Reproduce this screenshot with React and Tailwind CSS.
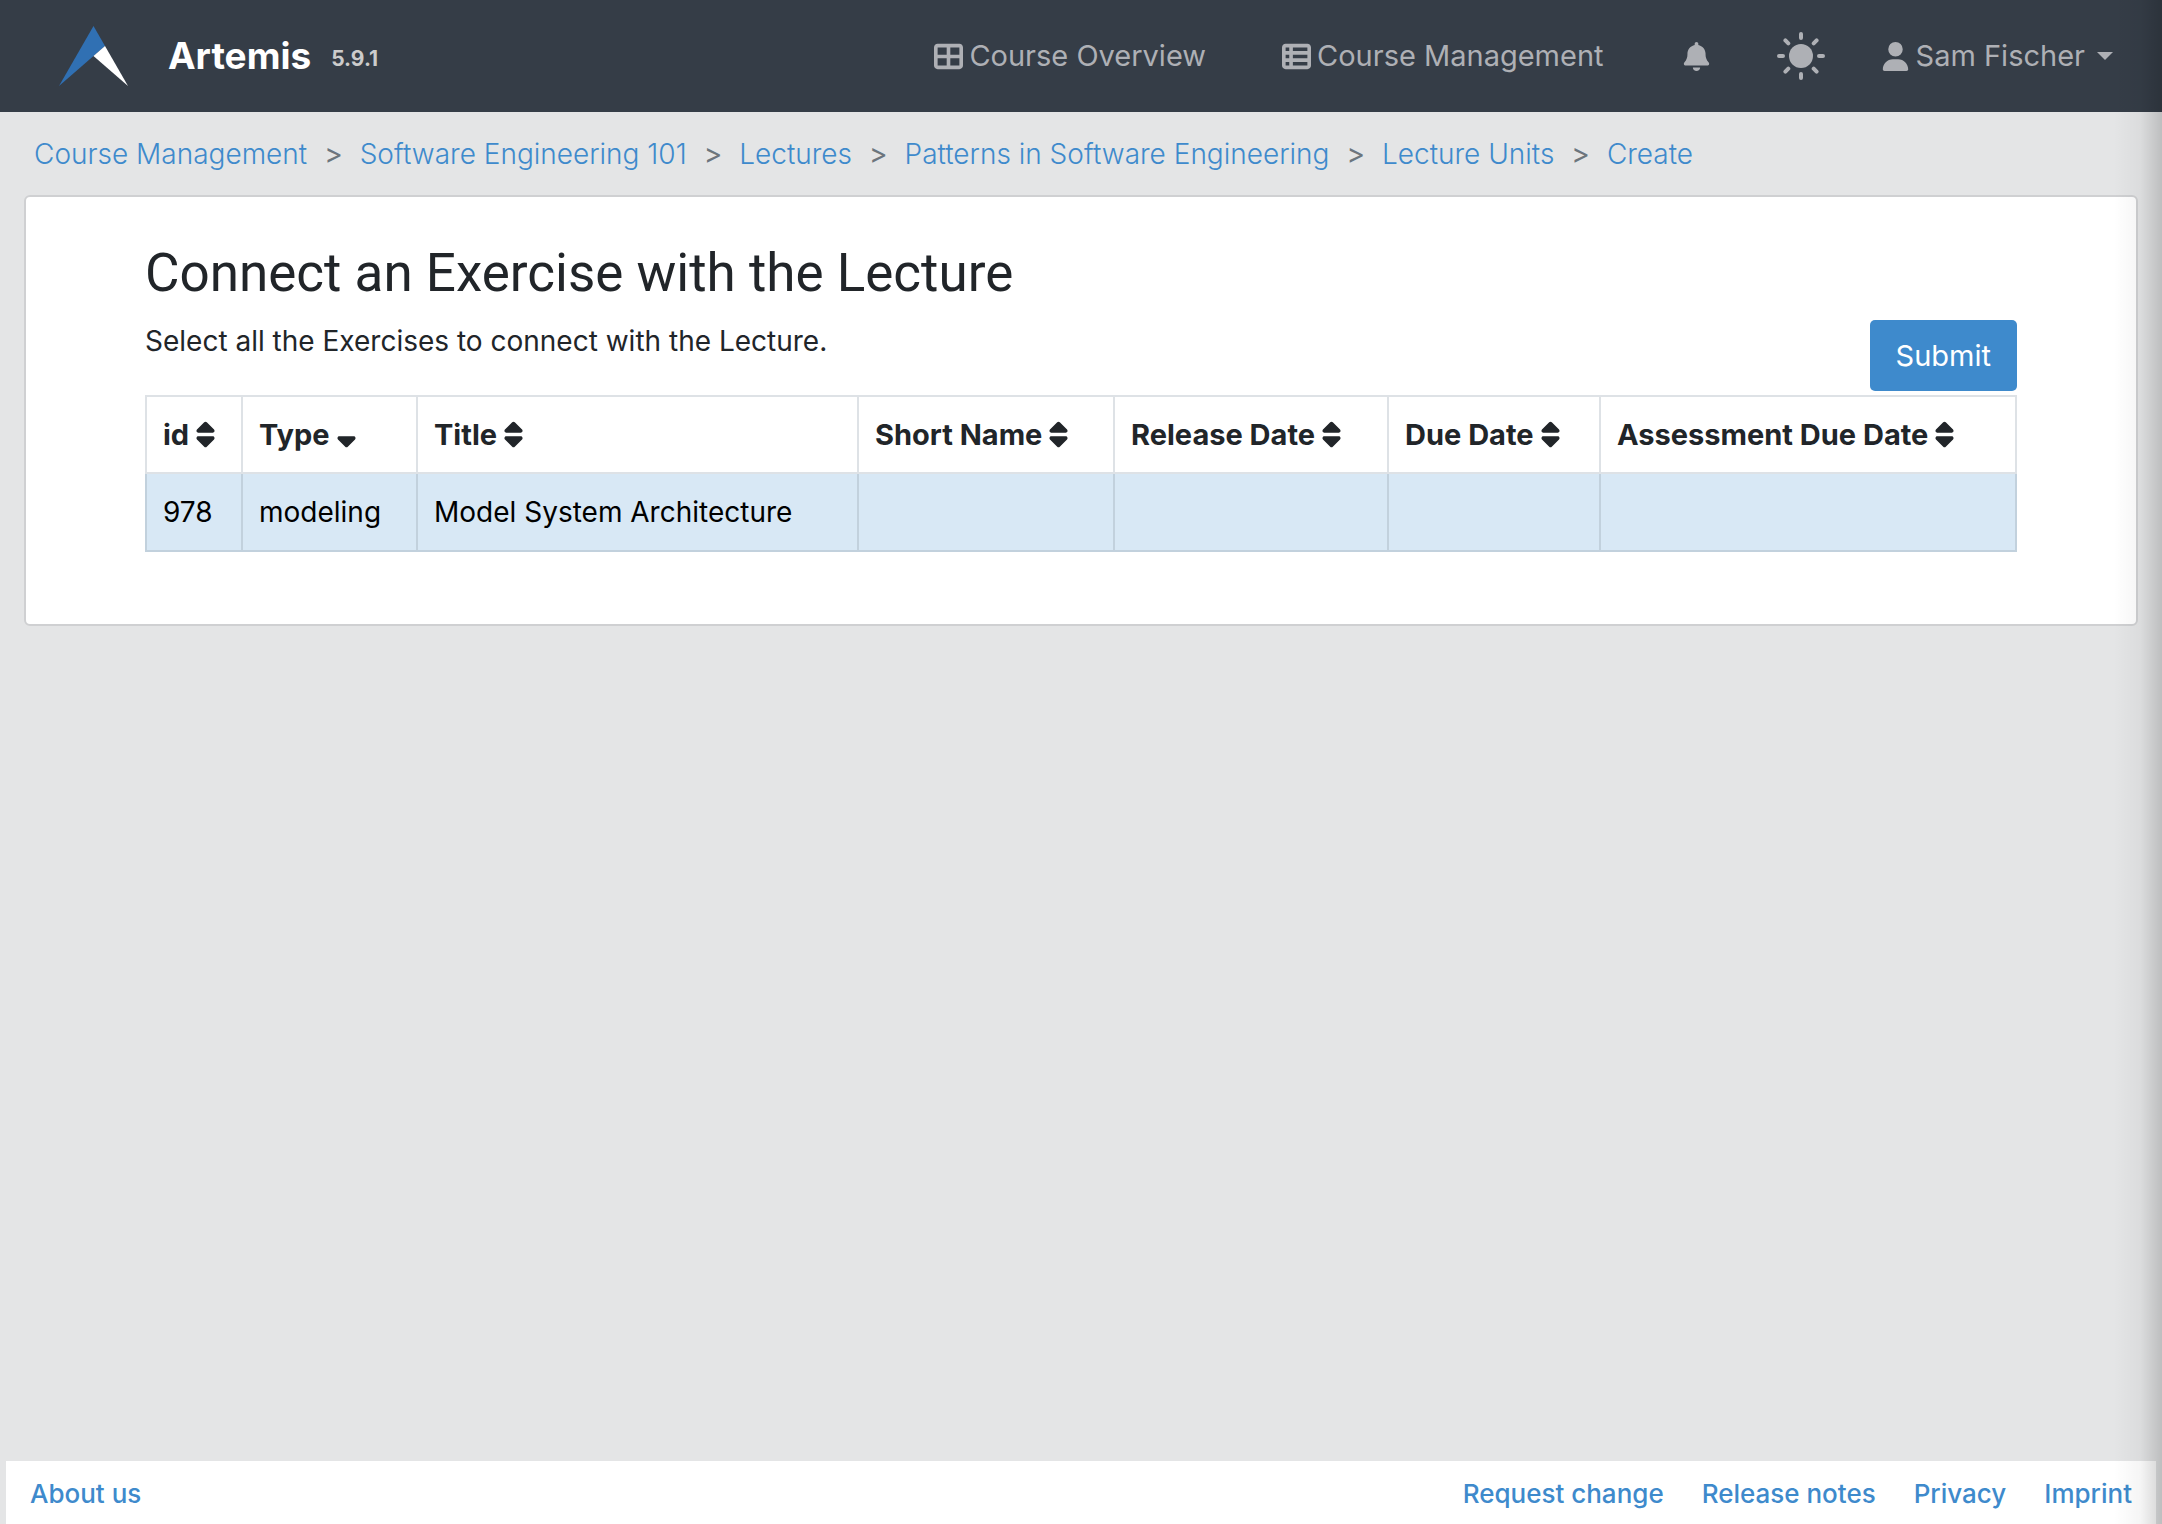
import { FaTableCellsLarge, FaTableList, FaBell, FaUser, FaSort, FaSortDown } from "react-icons/fa6";

const crumbs = ["Course Management", "Software Engineering 101", "Lectures", "Patterns in Software Engineering", "Lecture Units", "Create"];

const columns = [
  { label: "id", width: "w-[96px]" },
  { label: "Type", width: "w-[175px]", sorted: true },
  { label: "Title", width: "w-[441px]" },
  { label: "Short Name", width: "w-[256px]" },
  { label: "Release Date", width: "w-[274px]" },
  { label: "Due Date", width: "w-[212px]" },
  { label: "Assessment Due Date", width: "" },
];

const row = ["978", "modeling", "Model System Architecture", "", "", "", ""];

function Logo() {
  return (
    <svg viewBox="0 0 70 60" className="h-[60px] w-[70px]" aria-hidden="true">
      <path d="M34.500 0L46 20L34.500 30L0 60Z" fill="#3070b3" />
      <path d="M46 20L69 60L34.500 30Z" fill="#fff" />
    </svg>
  );
}

function Sun() {
  return (
    <svg viewBox="0 0 48 48" className="size-12" aria-hidden="true">
      <circle cx="24" cy="24" r="12" fill="currentColor" />
      <g stroke="currentColor" strokeWidth="4" strokeLinecap="round">
        <path d="M24 2v4M24 42v4M2 24h4M42 24h4M8.400 8.400l2.900 2.900M36.700 36.700l2.900 2.900M39.600 8.400l-2.900 2.900M11.300 36.700l-2.900 2.900" />
      </g>
    </svg>
  );
}

export default function App() {
  return (
    <div className="relative flex min-h-screen flex-col bg-[#e4e5e6] font-['Inter',sans-serif] text-[28px] leading-[42px] text-[#212529]">
      <header className="flex h-28 items-center bg-[#353d47] pr-[49px] pl-[59px] text-[#aeb0b5]">
        <a href="#home" className="flex items-center text-white">
          <Logo />
          <span className="ml-[39px] text-[37px] font-bold">Artemis</span>
          <span className="ml-5 pt-1.5 text-[21px] font-bold text-[#cccccc]">5.9.1</span>
        </a>
        <nav className="ml-auto flex items-center text-[29px]">
          <a href="#overview" className="flex items-center gap-1.5"><FaTableCellsLarge />Course Overview</a>
          <a href="#management" className="ml-[76px] flex items-center gap-1.5"><FaTableList />Course Management</a>
          <button type="button" aria-label="Notifications" className="ml-[78px]"><FaBell /></button>
          <button type="button" aria-label="Toggle theme" className="ml-[66px]"><Sun /></button>
          <button type="button" className="ml-14 flex items-center gap-1.5">
            <FaUser />
            Sam Fischer
            <svg viewBox="0 0 16 8" className="ml-1.5 h-2 w-4" aria-hidden="true"><path d="M0 0h16L8 8z" fill="currentColor" /></svg>
          </button>
        </nav>
      </header>

      <nav aria-label="Breadcrumb" className="px-[34px] pt-[21px] pb-5">
        <ol className="flex font-light">
          {crumbs.map((c, i) => (
            <li key={c} className="flex">
              {i > 0 && <span className="px-[17px] font-normal text-[#6c757d]">&gt;</span>}
              <a href={"#crumb-" + i} className="text-[#3e8acc]">{c}</a>
            </li>
          ))}
        </ol>
      </nav>

      <main className="mx-6 rounded-md border-2 border-[#cfd0d2] bg-white px-[119px] pt-11 pb-[72px]">
        <h1 className="font-['Roboto',sans-serif] text-[53px] leading-[64px] font-normal">Connect an Exercise with the Lecture</h1>
        <div className="flex items-start justify-between pt-[15px]">
          <p>Select all the Exercises to connect with the Lecture.</p>
          <button type="button" className="mb-1 h-[71px] rounded-[5px] bg-[#3e8acc] px-[26px] text-[29px] text-white">Submit</button>
        </div>
        <table className="w-full table-fixed border-collapse text-left">
          <thead>
            <tr className="h-[77px]">
              {columns.map((c) => (
                <th key={c.label} scope="col" className={"border-2 border-[#dee2e6] px-4 text-[29px] font-bold whitespace-nowrap " + c.width}>
                  <button type="button" className="flex items-center gap-0.5">
                    {c.label}
                    {c.sorted ? <FaSortDown className="shrink-0" /> : <FaSort className="shrink-0" />}
                  </button>
                </th>
              ))}
            </tr>
          </thead>
          <tbody>
            <tr className="h-[78px] bg-[#d8e8f5] text-black">
              {row.map((v, i) => (
                <td key={i} className="border-2 border-[#c2d1dd] px-4 whitespace-nowrap">{v}</td>
              ))}
            </tr>
          </tbody>
        </table>
      </main>

      <footer className="mx-[6px] mt-auto flex h-[63px] items-center gap-[38px] bg-white px-6 pt-0.5 text-[26px] font-medium text-[#3e8acc]">
        <a href="#about" className="mr-auto">About us</a>
        <a href="#request">Request change</a>
        <a href="#release">Release notes</a>
        <a href="#privacy">Privacy</a>
        <a href="#imprint">Imprint</a>
      </footer>

      <div className="pointer-events-none absolute inset-y-0 right-0 w-12 bg-linear-to-r from-transparent via-black/4 via-55% to-black/17" />
    </div>
  );
}
